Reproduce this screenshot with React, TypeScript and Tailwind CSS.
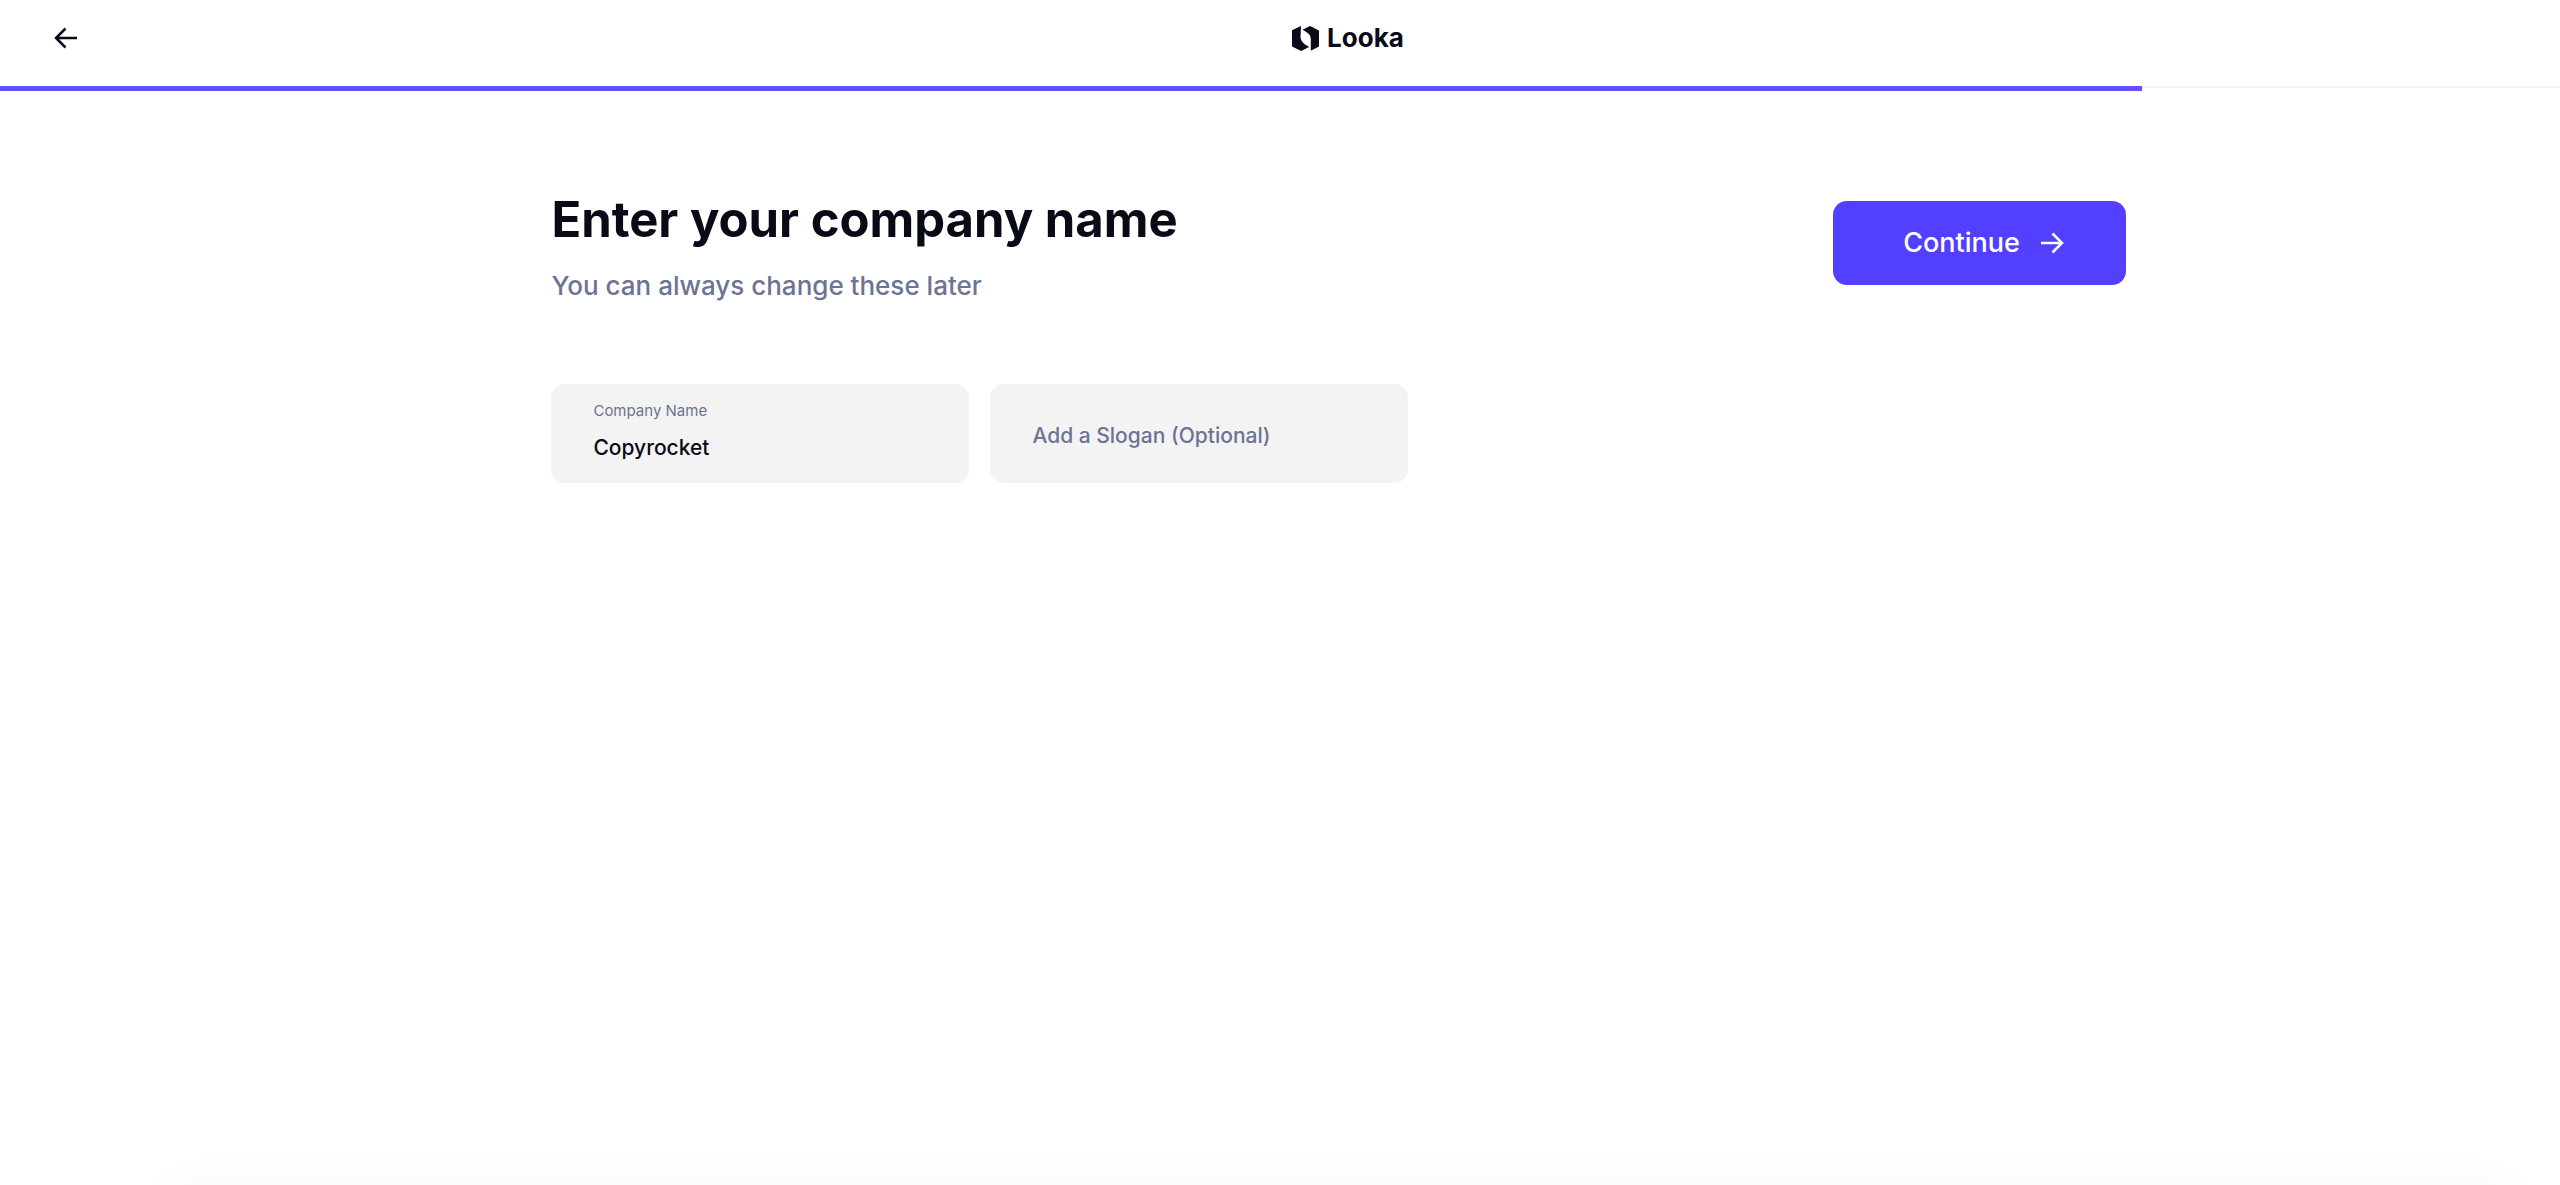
import { useState } from "react";

function LookaMark() {
  return (
    <svg viewBox="0 0 27 25" className="h-[25px] w-[27px]" fill="currentColor" aria-hidden="true">
      <path d="M9 0 0 4.300V20.500L9.200 25 17 21C15 19.200 9 17.500 8.500 11Z" />
      <path d="M10.500 3.700 18 0 27 4.500V20.500L18.800 24.800V12.500C18.500 7.500 13.500 5.500 10.500 3.700Z" />
    </svg>
  );
}

function Arrow({ className }: { className: string }) {
  return (
    <svg viewBox="0 0 24 24" className={className} fill="none" stroke="currentColor" aria-hidden="true">
      <path d="M1 12H22M12.500 2.500 22 12 12.500 21.500" />
    </svg>
  );
}

function Header() {
  return (
    <header>
      <div className="flex h-[86px] items-start pt-6">
        <div className="w-[136px] shrink-0 pl-[54px]">
          <button type="button" aria-label="Back" className="block pt-0.5">
            <Arrow className="size-6 rotate-180 stroke-[2.5px]" />
          </button>
        </div>
        <div className="flex flex-1 justify-center">
          <a href="#" className="flex items-center gap-2 text-[26px] leading-7 font-bold">
            <LookaMark />
            Looka
          </a>
        </div>
      </div>
      <div role="progressbar" aria-label="Setup progress" aria-valuenow={84} className="h-[5px] border-t-2 border-[#f4f4f5]">
        <div className="-mt-0.5 h-[5px] w-[83.67%] bg-[#6350ff]" />
      </div>
    </header>
  );
}

export default function App() {
  const [name, setName] = useState("Copyrocket");
  const [slogan, setSlogan] = useState("");

  return (
    <div className="flex min-h-screen flex-col overflow-hidden bg-white font-['Inter',sans-serif] text-[#090a18]">
      <Header />
      <main className="flex-1 pt-[99px] pr-[16.95%] pl-[21.54%]">
        <div className="flex items-start justify-between">
          <div>
            <h1 className="text-[49px] leading-[60px] font-bold">Enter your company name</h1>
            <p className="mt-5 text-[26px] leading-8 font-medium text-[#6c7394]">You can always change these later</p>
          </div>
          <button
            type="button"
            className="mt-[11px] flex h-[84px] w-[293px] items-center justify-center gap-5 rounded-[14px] bg-[#533fff] pl-2 text-[27px] font-medium text-white"
          >
            Continue
            <Arrow className="size-6 stroke-[2.5px]" />
          </button>
        </div>
        <form className="mt-20 flex gap-[21px] pt-0.5">
          <label className="flex h-[99px] w-[418px] flex-col rounded-[14px] bg-[#f3f3f3] px-[42px] pt-[15px]">
            <span className="text-[15px] leading-6 text-[#6c7394]">Company Name</span>
            <input
              value={name}
              onChange={(e) => setName(e.target.value)}
              className="mt-2 h-8 w-full text-[21px] font-medium outline-none"
            />
          </label>
          <input
            aria-label="Add a Slogan (Optional)"
            placeholder="Add a Slogan (Optional)"
            value={slogan}
            onChange={(e) => setSlogan(e.target.value)}
            className="h-[99px] w-[418px] rounded-[14px] bg-[#f3f3f3] px-[42px] pt-1 text-[21px] font-medium outline-none placeholder:text-[#6c7394]"
          />
        </form>
      </main>
      <div className="-mb-20 h-20 shrink-0 pr-[50px] pl-[170px]">
        <div className="h-20 shadow-[0_0_50px_rgba(0,0,0,0.03)]" />
      </div>
    </div>
  );
}
